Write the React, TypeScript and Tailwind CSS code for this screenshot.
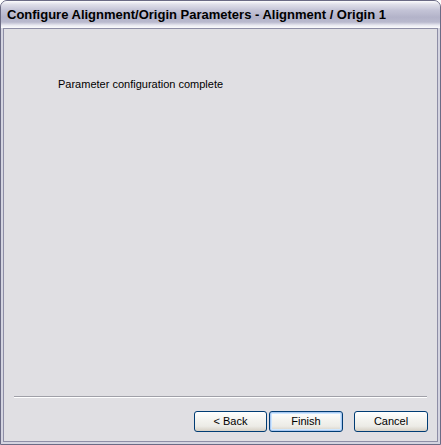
export default function App() {
  return (
    <div className="w-[441px] h-[445px] bg-white">
      <div className="w-full h-full flex flex-col rounded-t-[7px] border border-[#6b6b85] bg-[#c3c3d3] overflow-hidden">
        {/* Title bar */}
        <div className="h-[27px] shrink-0 flex items-center pl-[6px] bg-[linear-gradient(to_bottom,#fdfdfe_0%,#e0e0ea_12%,#c3c3d6_35%,#b3b3c9_60%,#b9b9ce_78%,#e9e9f1_90%,#fbfbfd_100%)]">
          <span className="text-[13px] font-bold text-black [font-family:'Liberation_Sans',Arial,sans-serif]">
            Configure Alignment/Origin Parameters - Alignment / Origin 1
          </span>
        </div>
        {/* Body frame */}
        <div className="flex-1 flex flex-col px-[2px] pb-[2px] bg-[#d4d4e0]">
          <div className="flex-1 flex flex-col border border-[#8e8ea6] bg-[#e0dfe3] [font-family:'Liberation_Sans',Arial,sans-serif] text-[11px] text-black">
            <div className="flex-1 pl-[54px] pt-[49px]">
              <p className="leading-[13px]">Parameter configuration complete</p>
            </div>
            <div className="mx-[10px] h-[2px] border-t border-[#a0a0a8] border-b border-b-white" />
            <div className="h-[43px] flex items-start justify-end pt-[13px] pr-[9px]">
              <button className="w-[73px] h-[21px] rounded-[3px] border border-[#003c74] bg-[linear-gradient(to_bottom,#ffffff_0%,#f4f4f0_40%,#ecebe6_75%,#d6d0c5_100%)] text-[11px] leading-none">
                &lt; Back
              </button>
              <button className="ml-[2px] w-[74px] h-[21px] rounded-[3px] border border-[#003c74] bg-[linear-gradient(to_bottom,#ffffff_0%,#f4f4f0_40%,#ecebe6_75%,#d6d0c5_100%)] shadow-[inset_0_0_0_1px_#a9c7f0,inset_0_0_0_2px_#cee7ff] text-[11px] leading-none">
                Finish
              </button>
              <button className="ml-[11px] w-[74px] h-[21px] rounded-[3px] border border-[#003c74] bg-[linear-gradient(to_bottom,#ffffff_0%,#f4f4f0_40%,#ecebe6_75%,#d6d0c5_100%)] text-[11px] leading-none">
                Cancel
              </button>
            </div>
          </div>
        </div>
      </div>
    </div>
  )
}
